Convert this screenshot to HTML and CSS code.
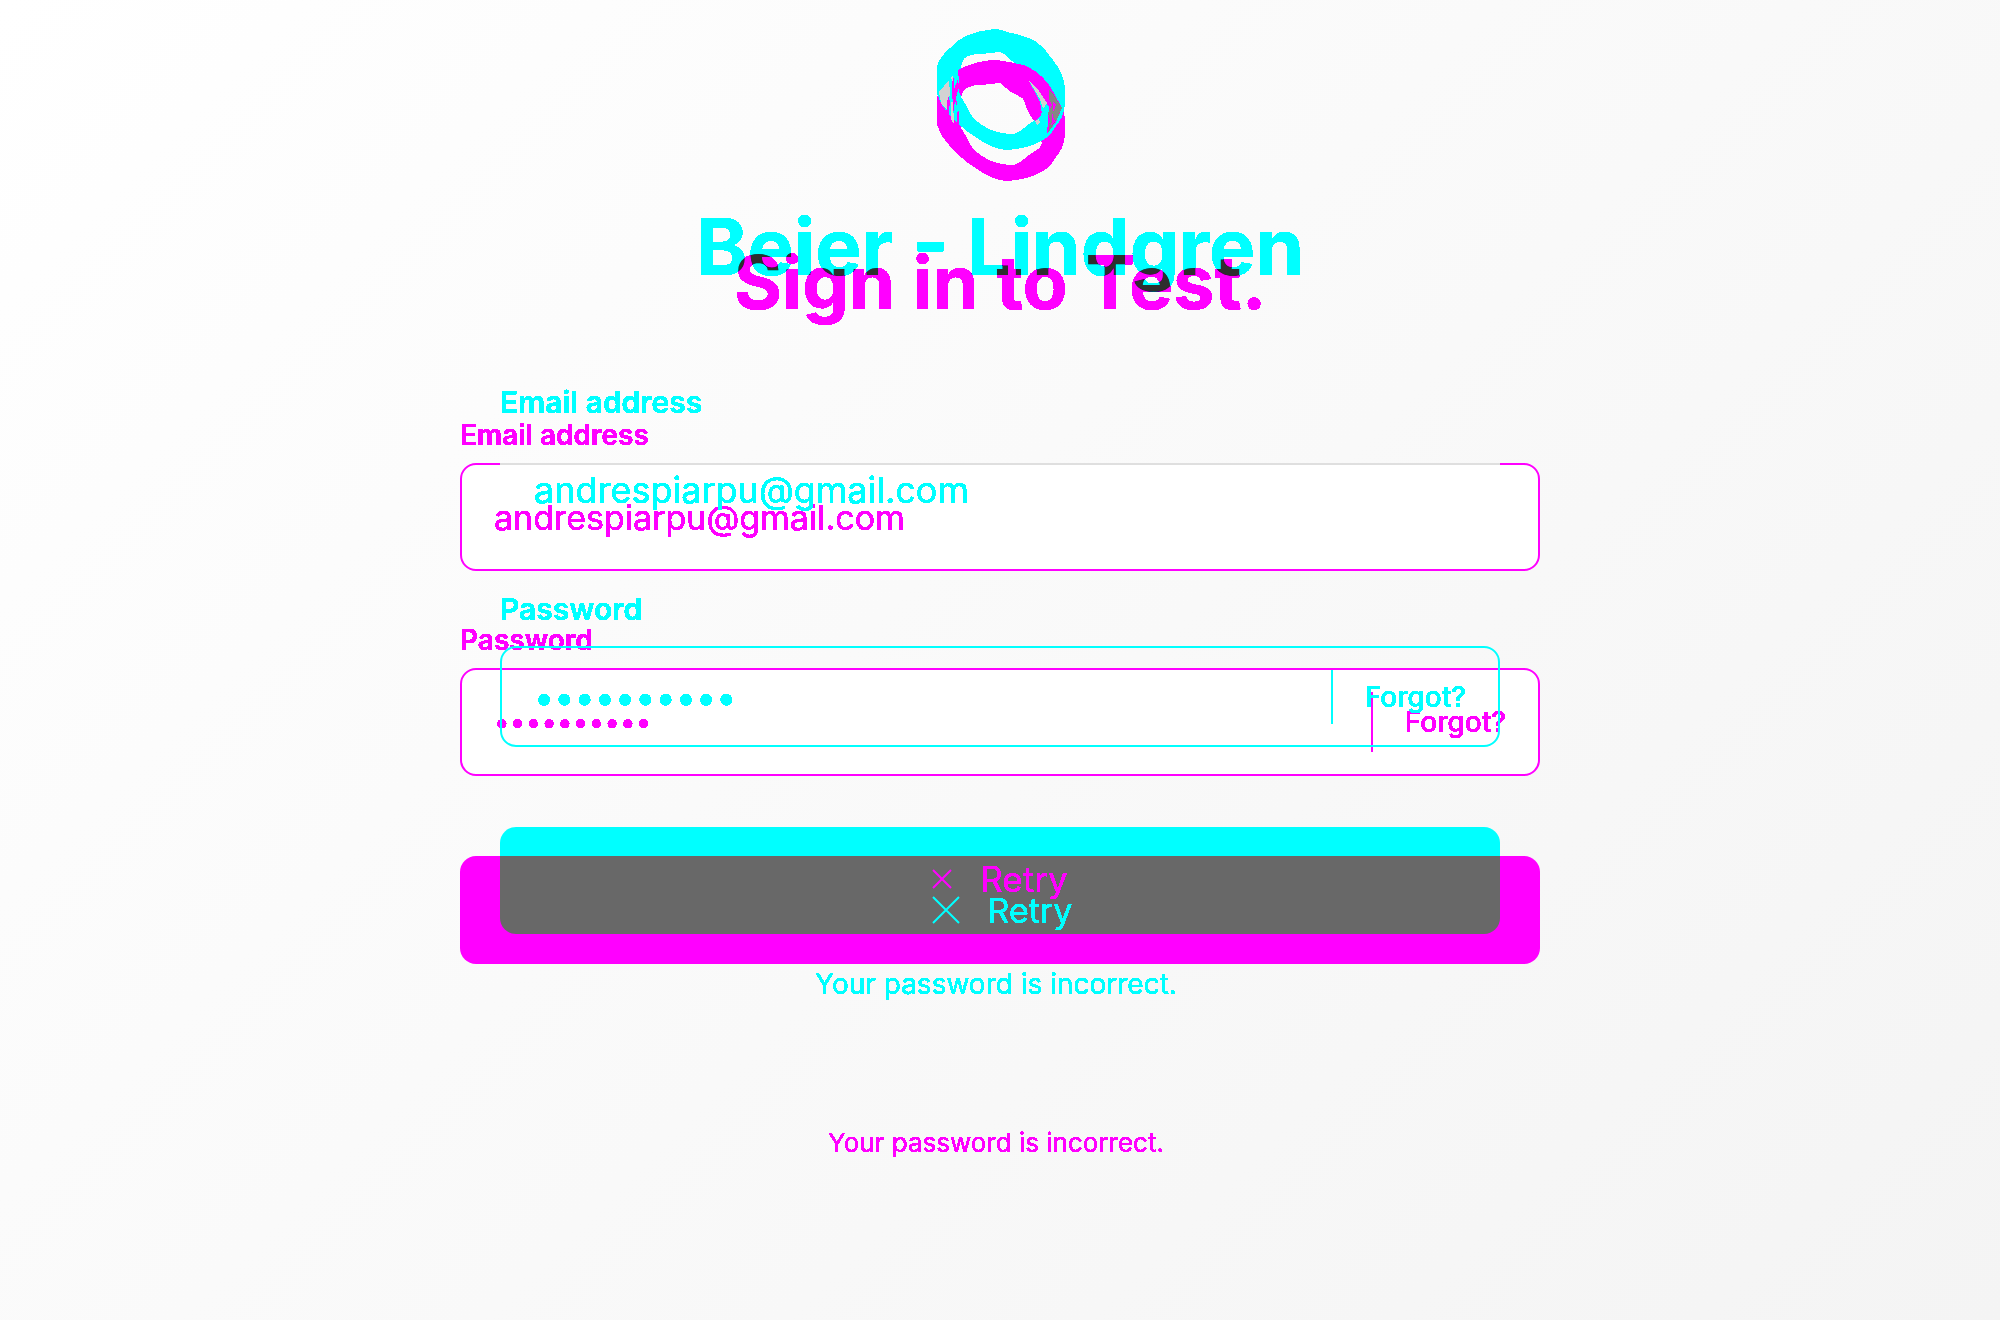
FILE: index.html
```html
<!DOCTYPE html>
<html lang="en">
<head>
<meta charset="utf-8">
<title>Sign in to Test.</title>
<link rel="stylesheet" href="styles.css">
</head>
<body>
<svg class="defs" width="0" height="0" aria-hidden="true">
  <filter id="crisp" color-interpolation-filters="sRGB" x="0" y="0" width="1" height="1">
    <feComponentTransfer><feFuncA type="discrete" tableValues="0 1 1 1 1 1 1 1"/></feComponentTransfer>
  </filter>
  <filter id="overlap" color-interpolation-filters="sRGB" x="0" y="0" width="1" height="1">
    <feColorMatrix values="-0.82 1 0 0 0  1 -0.82 0 0 0  -0.82 -0.82 0 0 1.82  0 0 0 1 0"/>
    <feComponentTransfer><feFuncA type="discrete" tableValues="0 1 1 1 1 1 1 1"/></feComponentTransfer>
  </filter>
</svg>
<main class="stage">
  <svg class="logo" viewBox="-2 0 132 154" shape-rendering="crispEdges" aria-hidden="true">
    <defs>
      <path id="band" fill-rule="evenodd" d="M58 0C66 0 70 3 75 4C86 6 98 10 104 16C110 20 113 27 117 31C125 41 129 51 129 61V73C129 84 125 91 120 97C116 104 112 108 107 111C99 116 88 120 70 121C58 120 50 115 41 109C28 101 17 91 9 80C4 74 3 70 1 64V38C2 31 8 24 14 19C22 9 36 2 58 0ZM26 34C27 28 33 25 45 25L64 23C70 24 72 31 79 34C84 36 88 38 89 43C90 50 95 56 98 61C102 68 105 74 105 80C107 86 104 88 96 93C88 98 84 104 77 105C67 105 54 102 46 96C39 92 33 84 31 78C28 72 22 66 22 56C24 48 24 42 26 34Z"/>
    </defs>
    <use href="#band" class="magenta" y="31"/>
    <use href="#band" class="cyan"/>
    <path class="magenta" d="M22 41C34 34 50 31 58 31C66 31 82 35 88 36C103 42 113 54 118 64L126 79L120 93L111 105L113 78L105 68L93 52L101 67L105 78V87L99 92L88 70L75 63L64 54H45L30 59L24 66Z"/>
    <path class="light" d="M93 52L103 62L111 74L107 80L104 70ZM3 63L13 51L14 64L11 81L5 74ZM99 92L103 90L104 94L101 96ZM15 48L17 46V54ZM15 73H17L18 95L15 90Z"/>
    <path class="dark" d="M113 61L118 66L126 79L121 90L112 104L114 91L112 84L116 76L113 70ZM18 66L21 63L20 72L18 76Z"/>
    <path class="magenta" d="M12 66L14 73L12 90L10 86ZM16 53L18 48V61L20 55L22 50V62L20 67L21 77L19 72L17 86ZM21 83L23 81V99L21 97ZM117 72L120 76L116 86L119 92L115 97L117 84Z"/>
  </svg>
  <div class="titles">
    <h1 class="title title-a">Beier - Lindgren</h1>
    <h1 class="title title-b">Sign in to Test.</h1>
  </div>
  <div class="forms">
    <form class="form form-b">
      <label for="email-b">Email address</label>
      <div class="box seam"><input id="email-b" type="text" value="andrespiarpu@gmail.com"></div>
      <label for="pass-b">Password</label>
      <div class="box"><input id="pass-b" type="password" value="abcdefghij"><a href="#">Forgot?</a></div>
      <button type="button"><svg viewBox="0 0 28 28" aria-hidden="true"><path d="M1 1L27 27M27 1L1 27"/></svg><span>Retry</span></button>
      <p>Your password is incorrect.</p>
    </form>
    <form class="form form-a">
      <label for="email-a">Email address</label>
      <div class="box plain"><input id="email-a" type="text" value="andrespiarpu@gmail.com"></div>
      <label for="pass-a">Password</label>
      <div class="box"><input id="pass-a" type="password" value="abcdefghij"><a href="#">Forgot?</a></div>
      <button type="button"><svg viewBox="0 0 20 20" aria-hidden="true"><path d="M1 1L19 19M19 1L1 19"/></svg><span>Retry</span></button>
      <p>Your password is incorrect.</p>
    </form>
  </div>
</main>
</body>
</html>
```
FILE: styles.css
```css
* { box-sizing: border-box; }
body {
  margin: 0;
  min-height: 100vh;
  font-family: Inter, "Liberation Sans", sans-serif;
  background: linear-gradient(135deg, #ffffff 0%, #fafafa 45%, #f4f4f4 100%);
}
.defs { position: absolute; }
.stage { display: flex; flex-direction: column; align-items: center; padding-top: 29px; }
.logo { display: block; width: 132px; height: 154px; }
.magenta { fill: #f0f; }
.cyan { fill: #0ff; }
.light { fill: #d2d2d2; }
.dark { fill: #868686; }
.titles { display: grid; justify-items: center; width: 100%; padding-top: 16px; isolation: isolate; filter: url(#overlap); }
.title { grid-area: 1 / 1; margin: 0; line-height: 96px; font-weight: 700; mix-blend-mode: screen; }
.title-a { color: #f00; font-size: 78px; }
.title-b { color: #0f0; font-size: 74px; padding-top: 35px; }
.forms { display: grid; justify-items: center; width: 100%; }
.form { grid-area: 1 / 1; display: flex; flex-direction: column; }
.form label { font-weight: 600; filter: url(#crisp); }
.box { position: relative; display: flex; align-items: center; padding-left: 32px; border: 2px solid; border-radius: 16px; }
.box input { flex: 1; min-width: 0; padding: 0; border: 0; outline: 0; background: none; color: inherit; font: inherit; filter: url(#crisp); }
.box a { color: inherit; text-decoration: none; font-weight: 500; font-size: 28px; border-left: 2px solid; padding: 0 32px; filter: url(#crisp); }
.form button { display: flex; align-items: center; justify-content: center; gap: 28px; border: 0; border-radius: 16px; padding: 0; font: inherit; }
.form button svg { fill: none; stroke: currentColor; stroke-width: 2; }
.form button svg, .form button span { position: relative; z-index: 2; }
.form button span { filter: url(#crisp); }
.form p { margin: 0; padding-right: 8px; text-align: center; line-height: 36px; filter: url(#crisp); }

.form-b { width: 54%; color: #f0f; padding-top: 87px; }
.form-b label { font-size: 28px; line-height: 36px; margin-bottom: 10px; }
.form-b .box { height: 108px; margin-bottom: 51px; background: #fff; font-size: 34px; }
.form-b .box input[type="password"] { font-size: 28px; }
.form-b .seam::before { content: ""; position: absolute; top: -2px; left: 38px; right: 38px; height: 2px; background: #dfdfdf; }
.form-b a { line-height: 60px; }
.form-b button { position: relative; z-index: 1; height: 108px; margin-top: 29px; padding-left: 4px; background: #f0f; color: #0ff; font-size: 34px; }
.form-b button::before { content: ""; position: absolute; inset: 0 40px 30px; border-radius: 0 0 16px 16px; background: #686868; }
.form-b button svg { width: 28px; height: 28px; }
.form-b p { font-size: 26px; margin-top: 161px; }

.form-a { width: 50%; color: #0ff; padding-top: 54px; }
.form-a label { font-size: 30px; line-height: 36px; margin-bottom: 19px; }
.form-a .box { height: 101px; margin-bottom: 51px; font-size: 36px; }
.form-a .plain { border-color: transparent; }
.form-a a { line-height: 54px; }
.form-a button { height: 104px; margin-top: 29px; background: #0ff; color: #f0f; font-size: 35px; }
.form-a button svg { width: 20px; height: 20px; }
.form-a p { position: relative; z-index: 2; font-size: 28px; margin-top: 35px; }
```
